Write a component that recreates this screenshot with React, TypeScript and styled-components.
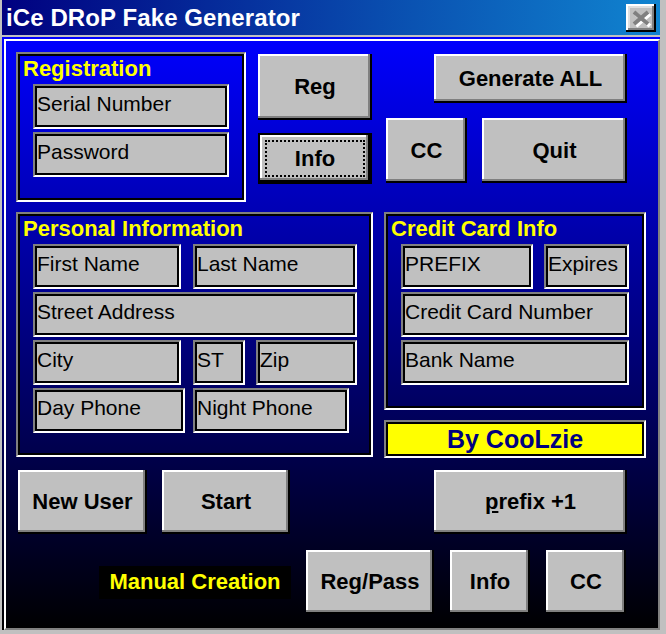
import React from 'react';
import styled, { createGlobalStyle } from 'styled-components';

const GlobalStyle = createGlobalStyle`
  html, body {
    margin: 0;
    padding: 0;
    background: #c0c0c0;
    overflow: hidden;
  }
  body {
    font-family: "Liberation Sans", Arial, sans-serif;
  }
  * {
    box-sizing: border-box;
  }
`;

const Window = styled.div`
  width: 666px;
  height: 634px;
  background: #c0c0c0;
  padding: 0 6px 4px 2px;
  display: flex;
  flex-direction: column;
`;

const TitleBar = styled.div`
  height: 35px;
  flex: none;
  display: flex;
  align-items: center;
  justify-content: space-between;
  padding: 0 4px 0 4px;
  background: linear-gradient(to right, #000080, #1084d0);
`;

const TitleText = styled.span`
  color: #fff;
  font-weight: bold;
  font-size: 24px;
  letter-spacing: 0.1px;
`;

const CloseButton = styled.div`
  width: 30px;
  height: 28px;
  background: #c0c0c0;
  box-shadow: inset -2px -2px 0 #000, inset 2px 2px 0 #fff, inset -4px -4px 0 #808080,
    inset 4px 4px 0 #dfdfdf;
  display: flex;
  align-items: center;
  justify-content: center;
`;

const Form = styled.div`
  flex: 1;
  margin-top: 2px;
  padding: 2px 0 0 2px;
  background: linear-gradient(to bottom, #0000ff, #000000);
  display: flex;
`;

const FormInner = styled.div`
  flex: 1;
  border-style: solid;
  border-width: 2px;
  border-color: #fff #808080 #808080 #fff;
  padding: 11px 0 0 10px;
  display: flex;
  flex-direction: column;
`;

const Row = styled.div<{ $mt?: number; $h?: number; $align?: string }>`
  display: flex;
  flex: none;
  align-items: ${(p) => p.$align || 'flex-start'};
  margin-top: ${(p) => p.$mt || 0}px;
  ${(p) => (p.$h ? `height: ${p.$h}px;` : '')}
`;

const Column = styled.div<{ $ml?: number; $w: number; $pt?: number }>`
  display: flex;
  flex-direction: column;
  margin-left: ${(p) => p.$ml || 0}px;
  width: ${(p) => p.$w}px;
  padding-top: ${(p) => p.$pt || 0}px;
`;

const Frame = styled.div<{ $w: number; $h: number }>`
  width: ${(p) => p.$w}px;
  height: ${(p) => p.$h}px;
  border-style: solid;
  border-width: 2px;
  border-color: #808080 #fff #fff #808080;
  box-shadow: inset 0 0 0 2px #000;
  padding: 2px 5px;
  display: flex;
  flex-direction: column;
`;

const FrameTitle = styled.div`
  color: #ffff00;
  font-weight: bold;
  font-size: 22px;
  line-height: 25px;
`;

const FieldList = styled.div`
  display: flex;
  flex-direction: column;
  gap: 3px;
  margin-top: 3px;
  padding-left: 10px;
`;

const FieldRow = styled.div`
  display: flex;
`;

const Field = styled.div<{ $w: number; $ml?: number }>`
  width: ${(p) => p.$w}px;
  height: 45px;
  margin-left: ${(p) => p.$ml || 0}px;
  background: #c0c0c0;
  border-style: solid;
  border-width: 2px;
  border-color: #808080 #fff #fff #808080;
  box-shadow: inset 0 0 0 2px #000;
  padding: 6px 0 0 2px;
  color: #000;
  font-size: 21px;
  line-height: 24px;
  white-space: nowrap;
  overflow: hidden;
`;

const Button = styled.div<{ $w: number; $h: number; $ml?: number; $mt?: number }>`
  width: ${(p) => p.$w}px;
  height: ${(p) => p.$h}px;
  margin-left: ${(p) => p.$ml || 0}px;
  margin-top: ${(p) => p.$mt || 0}px;
  flex: none;
  background: #c0c0c0;
  box-shadow: inset -2px -2px 0 #000, inset -4px -4px 0 #808080, inset 2px 2px 0 #fff;
  display: flex;
  align-items: center;
  justify-content: center;
  color: #000;
  font-weight: bold;
  font-size: 22px;
  white-space: nowrap;
`;

const DefaultButton = styled(Button)`
  border: 2px solid #000;
  padding: 5px;
`;

const FocusRing = styled.div`
  width: 100%;
  height: 100%;
  border: 2px dotted #000;
  display: flex;
  align-items: center;
  justify-content: center;
`;

const AuthorLabel = styled.div`
  height: 38px;
  margin-top: 10px;
  background: #ffff00;
  border-style: solid;
  border-width: 2px;
  border-color: #808080 #fff #fff #808080;
  box-shadow: inset 0 0 0 2px #000;
  display: flex;
  align-items: center;
  justify-content: center;
  color: #000080;
  font-weight: bold;
  font-size: 25px;
`;

const CaptionLabel = styled.div<{ $w: number; $ml: number }>`
  width: ${(p) => p.$w}px;
  height: 33px;
  margin-left: ${(p) => p.$ml}px;
  background: #000;
  color: #ffff00;
  font-weight: bold;
  font-size: 22px;
  display: flex;
  align-items: center;
  justify-content: center;
  white-space: nowrap;
`;

const CloseIcon = () => (
  <svg width="22" height="20" viewBox="0 0 22 20">
    <path d="M4 4 L18 16 M18 4 L4 16" stroke="#fff" strokeWidth="4" transform="translate(2 2)" />
    <path d="M4 4 L18 16 M18 4 L4 16" stroke="#808080" strokeWidth="4" />
  </svg>
);

export default function App() {
  return (
    <>
      <GlobalStyle />
      <Window>
        <TitleBar>
          <TitleText>iCe DRoP Fake Generator</TitleText>
          <CloseButton>
            <CloseIcon />
          </CloseButton>
        </TitleBar>
        <Form>
          <FormInner>
            <Row $h={150}>
              <Frame $w={230} $h={150}>
                <FrameTitle>Registration</FrameTitle>
                <FieldList>
                  <Field $w={196}>Serial Number</Field>
                  <Field $w={196}>Password</Field>
                </FieldList>
              </Frame>
              <Column $ml={12} $w={114} $pt={2}>
                <Button $w={114} $h={66}>Reg</Button>
                <DefaultButton $w={114} $h={51} $mt={13}>
                  <FocusRing>Info</FocusRing>
                </DefaultButton>
              </Column>
              <Column $ml={14} $w={241} $pt={2}>
                <Button $w={193} $h={49} $ml={48}>Generate ALL</Button>
                <Row $mt={15}>
                  <Button $w={81} $h={65}>CC</Button>
                  <Button $w={145} $h={65} $ml={15}>Quit</Button>
                </Row>
              </Column>
            </Row>

            <Row $mt={10} $h={246}>
              <Frame $w={357} $h={245}>
                <FrameTitle>Personal Information</FrameTitle>
                <FieldList>
                  <FieldRow>
                    <Field $w={148}>First Name</Field>
                    <Field $w={164} $ml={12}>Last Name</Field>
                  </FieldRow>
                  <FieldRow>
                    <Field $w={324}>Street Address</Field>
                  </FieldRow>
                  <FieldRow>
                    <Field $w={148}>City</Field>
                    <Field $w={52} $ml={12}>ST</Field>
                    <Field $w={101} $ml={11}>Zip</Field>
                  </FieldRow>
                  <FieldRow>
                    <Field $w={152}>Day Phone</Field>
                    <Field $w={156} $ml={8}>Night Phone</Field>
                  </FieldRow>
                </FieldList>
              </Frame>
              <Column $ml={11} $w={262}>
                <Frame $w={262} $h={198}>
                  <FrameTitle>Credit Card Info</FrameTitle>
                  <FieldList>
                    <FieldRow>
                      <Field $w={132}>PREFIX</Field>
                      <Field $w={85} $ml={11}>Expires</Field>
                    </FieldRow>
                    <FieldRow>
                      <Field $w={228}>Credit Card Number</Field>
                    </FieldRow>
                    <FieldRow>
                      <Field $w={228}>Bank Name</Field>
                    </FieldRow>
                  </FieldList>
                </Frame>
                <AuthorLabel>By CooLzie</AuthorLabel>
              </Column>
            </Row>

            <Row $mt={12} $h={64}>
              <Button $w={129} $h={64} $ml={2}>New User</Button>
              <Button $w={128} $h={64} $ml={15}>Start</Button>
              <Button $w={193} $h={64} $ml={144}>
                <span>
                  <u>p</u>refix +1
                </span>
              </Button>
            </Row>

            <Row $mt={16} $h={64} $align="center">
              <CaptionLabel $w={192} $ml={83}>Manual Creation</CaptionLabel>
              <Button $w={128} $h={64} $ml={15}>Reg/Pass</Button>
              <Button $w={80} $h={64} $ml={16}>Info</Button>
              <Button $w={80} $h={64} $ml={16}>CC</Button>
            </Row>
          </FormInner>
        </Form>
      </Window>
    </>
  );
}
